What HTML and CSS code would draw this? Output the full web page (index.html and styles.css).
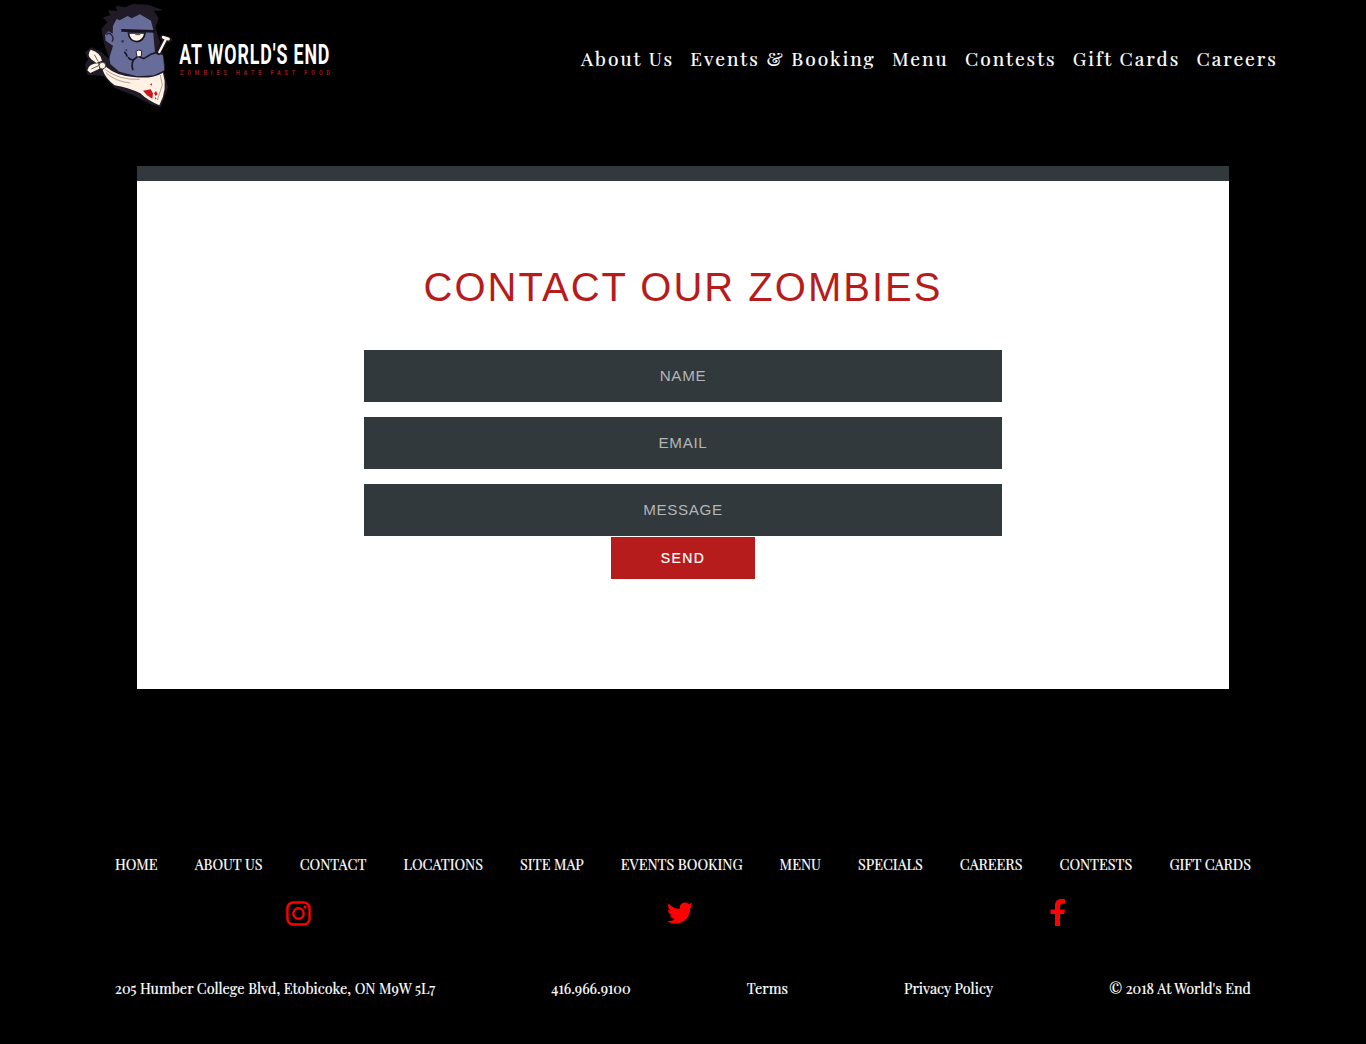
FILE: index.html
```html
<!DOCTYPE html>
<html lang="en">
<head>
<meta charset="utf-8">
<title>At World's End - Contact</title>
<link rel="stylesheet" href="styles.css">
</head>
<body>
<header class="header">
  <a class="logo" aria-label="At World's End">
    <svg width="260" height="110" viewBox="0 0 780 330">
      <path d="M64 88L82 66 68 53 91 46 84 31 111 33 108 17 136 22 158 12 205 14 250 31 222 33 236 55 226 83 241 128 230 152 248 158 256 196 252 216 264 262 242 322 211 313 157 284 104 264 70 228 23 225 15 195 24 178 15 157 34 142 62 155 91 180 75 142Z" fill="#211b27"/>
      <path d="M99 77L110 57 119 61 143 48 155 55 180 43 213 62 219 86 221 114 225 158 249 166 253 211 222 226 171 229 118 215 91 192 88 174 99 137 77 122 75 105 86 94 98 101Z" fill="#686c98"/>
      <path d="M80 105Q87 93 97 108Q102 118 96 125" fill="none" stroke="#27243c" stroke-width="4"/>
      <path d="M145 99Q148 123 171 125Q191 123 195 99Z" fill="#fff5e7" stroke="#161421" stroke-width="5"/>
      <path d="M124 91L224 94" stroke="#14121e" stroke-width="8"/>
      <path d="M166 104h15" stroke="#4d4650" stroke-width="3"/>
      <path d="M133 156Q141 163 141 170M144 172Q155 184 164 177L174 168 191 176 214 162 230 158M161 178Q153 193 159 211" fill="none" stroke="#17172a" stroke-width="5"/>
      <path d="M171 171L168 154Q176 147 185 152L184 169Z" fill="#fff1df" stroke="#28233d" stroke-width="3"/>
      <circle cx="128" cy="124" r="4" fill="#363654"/><circle cx="139" cy="151" r="3" fill="#363654"/>
      <path d="M236 158L257 119M248 112L268 119" stroke="#211b27" stroke-width="15" stroke-linecap="round"/>
      <path d="M238 156L257 119" stroke="#fff5e7" stroke-width="7" stroke-linecap="round"/>
      <path d="M250 112L265 117" stroke="#fff5e7" stroke-width="9" stroke-linecap="round"/>
      <path d="M32 149Q19 165 34 178L49 189 66 182Q62 158 32 149Z" fill="#fff5e7"/>
      <path d="M55 190Q27 190 22 211L31 219 58 206Z" fill="#fff5e7"/>
      <circle cx="67" cy="197" r="10" fill="#fff5e7" stroke="#463d43" stroke-width="3"/>
      <path d="M79 201Q108 227 160 231Q216 238 249 218Q264 268 238 316Q201 300 181 280Q143 262 104 256Q76 235 68 210Z" fill="#fff2e4"/>
      <path d="M78 218Q104 244 151 249M76 209Q119 241 179 238M241 225L247 255 232 300" fill="none" stroke="#8b7877" stroke-width="2"/>
      <path d="M43 164L55 185M34 207L56 197" fill="none" stroke="#716061" stroke-width="3"/>
      <path d="M189 272L212 268 219 280 217 296 201 286ZM222 280l6-7 5 10-6 5ZM210 254l5-5 1 8ZM225 292l5 3-4 4Z" fill="#c9171e"/>
      <text x="298" y="192" class="logo-name" textLength="453" lengthAdjust="spacingAndGlyphs">AT WORLD'S END</text>
      <text x="300" y="226" class="logo-tag" textLength="462" lengthAdjust="spacingAndGlyphs">ZOMBIES HATE FAST FOOD</text>
    </svg>
  </a>
  <nav class="main-nav">
    <a>About Us</a><a>Events &amp; Booking</a><a>Menu</a><a>Contests</a><a>Gift Cards</a><a>Careers</a>
  </nav>
</header>
<main class="contact">
  <h1>CONTACT OUR ZOMBIES</h1>
  <form class="form">
    <input type="text" placeholder="NAME" aria-label="Name">
    <input type="email" placeholder="EMAIL" aria-label="Email">
    <input type="text" placeholder="MESSAGE" aria-label="Message">
    <button type="button">SEND</button>
  </form>
</main>
<footer class="footer">
  <nav class="footer-nav">
    <a>HOME</a><a>ABOUT US</a><a>CONTACT</a><a>LOCATIONS</a><a>SITE MAP</a><a>EVENTS BOOKING</a><a>MENU</a><a>SPECIALS</a><a>CAREERS</a><a>CONTESTS</a><a>GIFT CARDS</a>
  </nav>
  <div class="social">
    <a aria-label="Instagram"><svg width="25" height="25" viewBox="0 0 26 26" fill="none" stroke="#f00" stroke-width="2.5"><rect x="1.5" y="1.5" width="23" height="23" rx="6"/><circle cx="13" cy="13" r="5.4"/><circle cx="19.8" cy="6.2" r="1.6" fill="#f00" stroke="none"/></svg></a>
    <a aria-label="Twitter"><svg width="26" height="26" viewBox="0 0 512 512" fill="#f00"><path d="M459.4 151.7c.3 4.5.3 9.1.3 13.6 0 138.7-105.6 298.6-298.6 298.6-59.5 0-114.7-17.2-161.1-47.1 8.4 1 16.6 1.3 25.3 1.3 49.1 0 94.2-16.6 130.3-44.8-46.1-1-84.8-31.2-98.1-72.8 6.5 1 13 1.6 19.8 1.6 9.4 0 18.8-1.3 27.6-3.6-48.1-9.7-84.1-52-84.1-103v-1.3c14 7.8 30.2 12.7 47.4 13.3-28.3-18.8-46.8-51-46.8-87.4 0-19.5 5.2-37.4 14.3-53 51.7 63.7 129.3 105.3 216.4 109.8-1.6-7.8-2.6-15.9-2.6-24 0-57.8 46.8-104.9 104.9-104.9 30.2 0 57.5 12.7 76.7 33.1 23.7-4.5 46.5-13.3 66.6-25.3-7.8 24.4-24.4 44.8-46.1 57.8 21.1-2.3 41.6-8.1 60.4-16.2-14.3 20.8-32.2 39.3-52.6 54.3z"/></svg></a>
    <a aria-label="Facebook"><svg width="16" height="28" viewBox="0 0 16 28" fill="#f00"><path d="M15 .3v4.5h-2.6c-2 0-2.4 1-2.4 2.4v3.2h5L14.3 15H10v12H5V15H.5v-4.6H5V6.6C5 2.4 7.5.1 11.2.1c1.8 0 3.3.1 3.8.2z"/></svg></a>
  </div>
  <div class="legal">
    <span>205 Humber College Blvd, Etobicoke, ON M9W 5L7</span><span>416.966.9100</span><span>Terms</span><span>Privacy Policy</span><span>© 2018 At World's End</span>
  </div>
</footer>
</body>
</html>
```
FILE: styles.css
```css
* { box-sizing: border-box; }
body {
  margin: 0;
  min-height: 1044px;
  background: #000;
  color: #fff;
  font-family: "Playfair Display", "Liberation Serif", serif;
}
.header {
  height: 166px;
  padding: 0 88px 0 80px;
  display: flex;
  align-items: flex-start;
  justify-content: space-between;
}
.logo svg { display: block; overflow: visible; }
.logo-name { font: bold 82px Roboto, sans-serif; letter-spacing: 4px; fill: #fff; }
.logo-tag { font: bold 24px Roboto, sans-serif; letter-spacing: 18px; fill: #a5141a; }
.main-nav {
  width: 697px;
  padding-top: 46px;
  display: flex;
  justify-content: space-between;
  font-size: 19.2px;
  line-height: 24px;
  letter-spacing: 2px;
  white-space: nowrap;
  -webkit-text-stroke: .2px #fff;
}

.contact {
  width: 1092px;
  height: 523px;
  margin: 0 auto;
  padding-top: 82px;
  border-top: 15px solid #31393c;
  background: #fff;
  font-family: "Liberation Sans", Arial, sans-serif;
}
.contact h1 {
  margin: 0 0 39px;
  color: #b71c1c;
  font-size: 40px;
  line-height: 48px;
  font-weight: 400;
  letter-spacing: 2px;
  text-align: center;
}
.form {
  width: 638px;
  margin: 0 auto;
  display: flex;
  flex-direction: column;
  align-items: center;
}
.form input {
  width: 100%;
  height: 52px;
  margin: 0 0 15px;
  padding: 0 0 2px;
  border: 0;
  border-radius: 0;
  background: #31393c;
  color: #fff;
  font: 15.2px "Liberation Sans", Arial, sans-serif;
  letter-spacing: .65px;
  text-align: center;
}
.form input:last-of-type { margin-bottom: 1px; }
.form input::placeholder { color: #b3b5b6; opacity: 1; }
.form button {
  width: 144px;
  height: 42px;
  padding: 0;
  border: 0;
  background: #b71c1c;
  color: #fff;
  font: 14px "Liberation Sans", Arial, sans-serif;
  letter-spacing: 1.4px;
  -webkit-text-stroke: .2px #fff;
}

.footer {
  padding: 165px 115px 0;
  white-space: nowrap;
  font-size: 14.4px;
  line-height: 20px;
  -webkit-text-stroke: .2px #fff;
}
.footer-nav,
.legal {
  display: flex;
  justify-content: space-between;
}
.social {
  height: 30px;
  margin-top: 24px;
  padding: 0 185px 0 171px;
  display: flex;
  align-items: center;
  justify-content: space-between;
}
.social a { display: flex; }
.social a:nth-child(2) { margin-right: 2px; }
.legal { margin-top: 50px; }
```
